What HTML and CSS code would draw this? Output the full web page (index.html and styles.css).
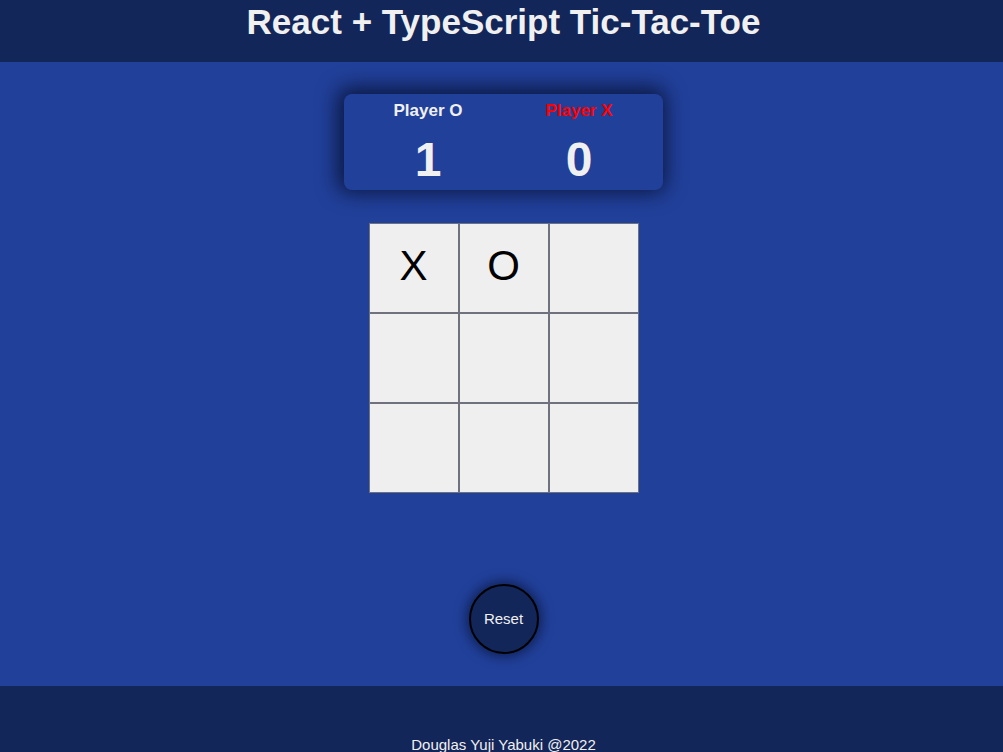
FILE: index.html
```html
<!DOCTYPE html>
<html>
<head>
<meta charset="utf-8">
<link rel="stylesheet" href="styles.css">
</head>
<body>
<header class="header"><h1 class="title">React + TypeScript Tic-Tac-Toe</h1></header>
<main class="main">
  <div class="score">
    <div class="player">
      <div class="label">Player O</div>
      <div class="num">1</div>
    </div>
    <div class="player">
      <div class="label active">Player X</div>
      <div class="num">0</div>
    </div>
  </div>
  <div class="board">
    <button class="cell">X</button>
    <button class="cell">O</button>
    <button class="cell"></button>
    <button class="cell"></button>
    <button class="cell"></button>
    <button class="cell"></button>
    <button class="cell"></button>
    <button class="cell"></button>
    <button class="cell"></button>
  </div>
  <button class="reset">Reset</button>
</main>
<footer class="footer">Douglas Yuji Yabuki @2022</footer>
</body>
</html>
```
FILE: styles.css
```css
* { box-sizing: border-box; }
html, body { margin: 0; padding: 0; height: 752px; overflow: hidden; }
body {
  font-family: "Liberation Sans", Arial, sans-serif;
  background: #21409a;
  color: #f0f0f0;
  display: flex;
  flex-direction: column;
}
.header {
  background: #13265a;
  height: 62px;
  display: flex;
  justify-content: center;
  padding-left: 4px;
}
.title {
  margin: 0;
  padding-top: 2px;
  font-size: 35px;
  line-height: 40px;
  font-weight: bold;
  color: #f0f0f0;
}
.main {
  height: 624px;
  display: flex;
  flex-direction: column;
  align-items: center;
  padding-top: 32px;
  padding-left: 4px;
}
.score {
  width: 319px;
  height: 96px;
  border-radius: 8px;
  background: #21409a;
  box-shadow: -2px -2px 20px 5px rgba(5, 12, 40, 0.75);
  display: flex;
  justify-content: space-between;
  padding: 7px 48px 0 48px;
}
.player {
  width: 72px;
  display: flex;
  flex-direction: column;
  align-items: center;
}
.label {
  font-size: 17px;
  line-height: 20px;
  font-weight: bold;
  color: #f0f0f0;
  white-space: nowrap;
}
.label.active { color: #ff0000; }
.num {
  margin-top: 11px;
  font-size: 48px;
  line-height: 56px;
  font-weight: bold;
  color: #f0f0f0;
}
.board {
  margin-top: 33px;
  display: grid;
  grid-template-columns: repeat(3, 90px);
  grid-template-rows: repeat(3, 90px);
}
.cell {
  width: 90px;
  height: 90px;
  margin: 0;
  padding: 0 0 4px 0;
  border: 1px solid #6f717d;
  background: #efefef;
  font-family: "Liberation Sans", Arial, sans-serif;
  font-size: 42px;
  color: #000;
}
.reset {
  margin-top: 91px;
  width: 70px;
  height: 70px;
  border-radius: 50%;
  border: 2px solid #000;
  background: #13265a;
  color: #f0f0f0;
  font-family: "Liberation Sans", Arial, sans-serif;
  font-size: 15px;
  box-shadow: 0 0 12px 3px rgba(5, 12, 40, 0.6);
  padding: 0 0 2px 0;
}
.footer {
  background: #13265a;
  height: 66px;
  flex-shrink: 0;
  text-align: center;
  font-size: 15px;
  padding-top: 50px;
  padding-left: 4px;
  color: #f0f0f0;
}
```
